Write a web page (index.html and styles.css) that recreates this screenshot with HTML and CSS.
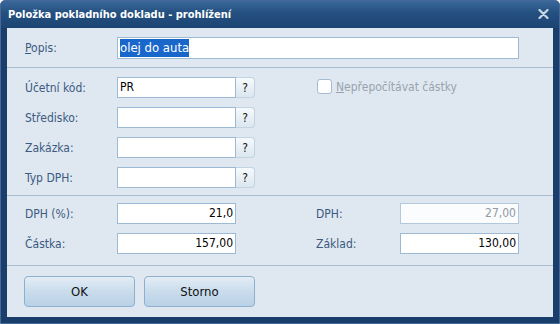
FILE: index.html
```html
<!DOCTYPE html>
<html lang="cs">

<head>
    <meta charset="UTF-8">
    <title>Položka pokladního dokladu - prohlížení</title>
    <link rel="stylesheet" href="styles.css">
</head>

<body>
    <div class="window">
        <div class="titlebar">
            <span class="title">Položka pokladního dokladu - prohlížení</span>
            <span class="close">
                <svg width="11" height="10" viewBox="0 0 11 10">
                    <path d="M1.5 1 L9.5 9 M9.5 1 L1.5 9" stroke="#c9d9ea" stroke-width="2.2" stroke-linecap="round"/>
                </svg>
            </span>
        </div>

        <div class="content">
            <div class="section sec-popis">
                <label class="lbl"><u>P</u>opis:</label>
                <div class="box box-wide"><span class="selected">olej do auta</span></div>
            </div>

            <div class="section sec-kody">
                <label class="lbl">Účetní kód:</label>
                <div class="box">PR</div>
                <button class="btn-help">?</button>
                <label class="check">
                    <span class="checkbox"></span>
                    <span><u>N</u>epřepočítávat částky</span>
                </label>

                <label class="lbl">Středisko:</label>
                <div class="box"></div>
                <button class="btn-help">?</button>
                <span></span>

                <label class="lbl">Zakázka:</label>
                <div class="box"></div>
                <button class="btn-help">?</button>
                <span></span>

                <label class="lbl">Typ DPH:</label>
                <div class="box"></div>
                <button class="btn-help">?</button>
                <span></span>
            </div>

            <div class="section sec-castky">
                <label class="lbl">DPH (%):</label>
                <div class="box num">21,0</div>
                <span></span>
                <label class="lbl">DPH:</label>
                <div class="box num disabled">27,00</div>

                <label class="lbl">Částka:</label>
                <div class="box num">157,00</div>
                <span></span>
                <label class="lbl">Základ:</label>
                <div class="box num">130,00</div>
            </div>

            <div class="section sec-buttons">
                <button class="btn">OK</button>
                <button class="btn">Storno</button>
            </div>
        </div>
    </div>
</body>

</html>
```

FILE: styles.css
```css
body {
    margin: 0;
    font-family: "DejaVu Sans Condensed", "DejaVu Sans", sans-serif;
    font-size: 12px;
    background: #ffffff;
}

.window {
    width: 560px;
    height: 324px;
    box-sizing: border-box;
    display: flex;
    flex-direction: column;
    background: #1b3d6b;
    border: 1px solid #44699a;
    border-radius: 5px 5px 0 0;
    padding: 0 6px 6px 6px;
}

.titlebar {
    height: 27px;
    margin: 0 -6px;
    padding: 0 7px;
    display: flex;
    align-items: center;
    justify-content: space-between;
    background: linear-gradient(#3a679b, #24507f 45%, #1c4473);
    border-radius: 4px 4px 0 0;
}

.title {
    color: #ffffff;
    font-weight: bold;
    font-size: 11px;
    margin-top: -1px;
}

.close {
    display: flex;
    margin-right: 3px;
    margin-top: -2px;
}

.content {
    flex: 1;
    background: #dfe8f0;
    display: flex;
    flex-direction: column;
}

.section {
    border-bottom: 1px solid #a8bed2;
    padding-left: 18px;
}

.lbl {
    color: #3b5a80;
    align-self: center;
}

.box {
    height: 21px;
    box-sizing: border-box;
    background: #ffffff;
    border: 1px solid #9dbad4;
    padding: 0 2px;
    line-height: 19px;
    color: #000000;
    white-space: nowrap;
    overflow: hidden;
}

.num {
    text-align: right;
}

.disabled {
    color: #8f9aa6;
    background: #fbfcfd;
    border-color: #b3c8da;
}

.selected {
    background: #1a67cc;
    color: #ffffff;
    padding: 1px 0 2px;
    font-size: 13px;
}

/* popis */
.sec-popis {
    display: grid;
    grid-template-columns: 92px 402px;
    padding-top: 9px;
    padding-bottom: 8px;
}

.box-wide {
    height: 22px;
    line-height: 20px;
}

/* kody */
.sec-kody {
    display: grid;
    grid-template-columns: 92px 119px 19px auto;
    row-gap: 9px;
    padding-top: 9px;
    padding-bottom: 7px;
}

.btn-help {
    height: 21px;
    padding: 0;
    font-family: inherit;
    font-size: 12px;
    color: #111111;
    border: 1px solid #c2d3e2;
    border-left: none;
    border-radius: 0 4px 4px 0;
    background: linear-gradient(#f7fafc, #dbe6ef);
}

.check {
    display: flex;
    align-items: center;
    gap: 4px;
    margin-left: 62px;
    color: #98a3ae;
    margin-top: -2px;
}

.checkbox {
    width: 13px;
    height: 13px;
    border: 1px solid #a3bad0;
    border-radius: 3px;
    background: #ffffff;
}

/* castky */
.sec-castky {
    display: grid;
    grid-template-columns: 92px 119px 80px 84px 119px;
    row-gap: 9px;
    padding-top: 7px;
    padding-bottom: 11px;
}

/* tlacitka */
.sec-buttons {
    border-bottom: none;
    display: flex;
    gap: 9px;
    padding-top: 10px;
    padding-left: 17px;
}

.btn {
    width: 111px;
    height: 31px;
    font-family: inherit;
    font-size: 13px;
    font-weight: normal;
    color: #111111;
    border: 1px solid #8eb0cf;
    border-radius: 4px;
    background: linear-gradient(#e3edf6, #c9dcec 50%, #b9d1e6);
}
```
